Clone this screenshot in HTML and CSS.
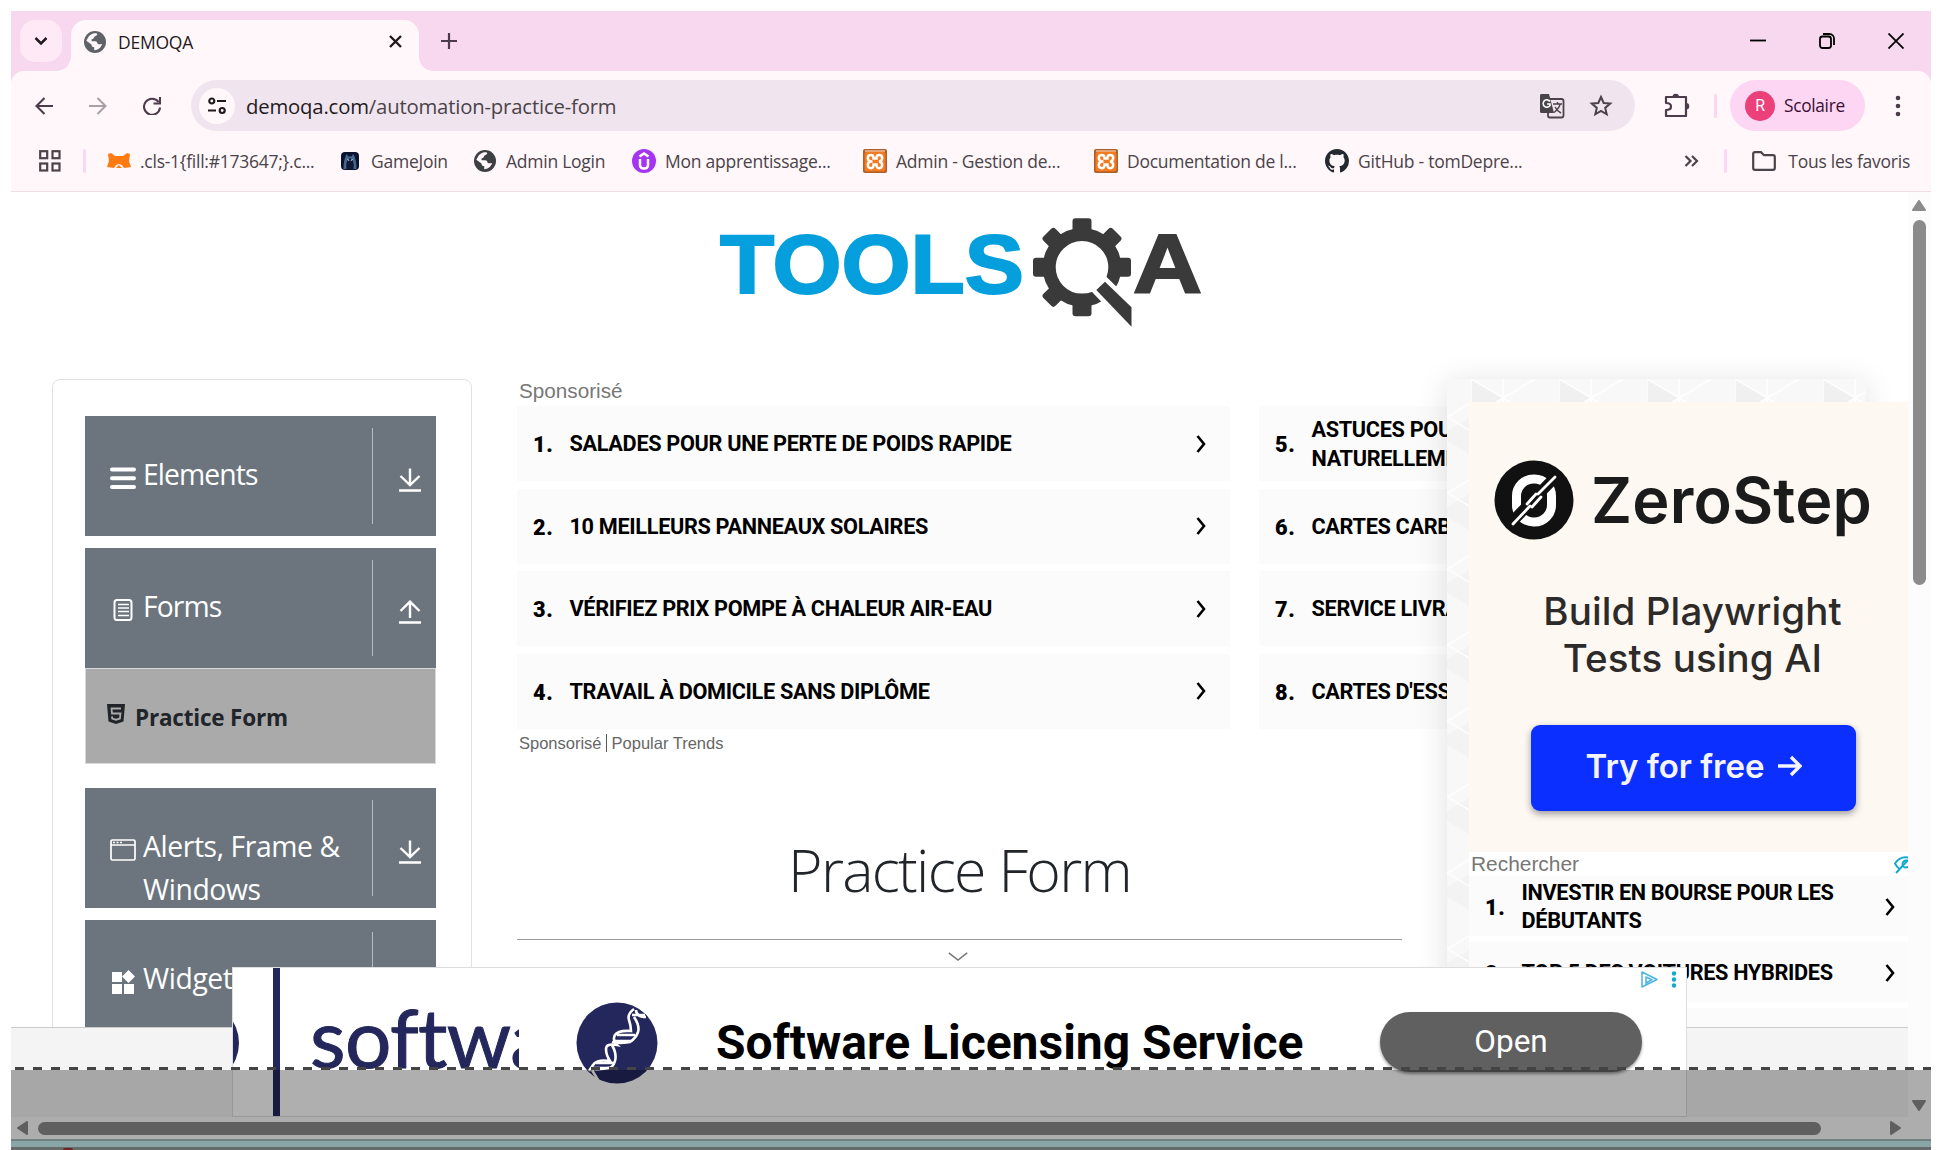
FILE: index.html
```html
<!DOCTYPE html>
<html lang="fr">
<head>
<meta charset="utf-8">
<title>DEMOQA</title>
<link rel="stylesheet" href="styles.css">
</head>
<body>
<svg class="defs" width="0" height="0">
  <symbol id="globe" viewBox="0 0 22 22"><circle cx="11" cy="11" r="11" fill="currentColor"/><path d="M3 8.500C5 4 8 2.300 12 2.300c1 0 1.500.8 1 1.600-.6 1-2.500 1-2.800 2.200-.3 1.300-.9 2-2.200 2.200-.8.2-.6 1.500 0 2h3.200c1.500 0 2.300 1 2.300 2.300 0 1 2.800.7 4.600.4-1.200 3.900-4.300 6.200-7.900 6.200v-2.900c-1.700-.2-2.700-1.200-2.700-2.900L2.300 9.800z" fill="#fff7fa"/></symbol>
  <symbol id="down" viewBox="0 0 22 24"><path d="M11 0.500v16M1.500 8l9.500 9 9.500-9M0 22.500h22" fill="none" stroke="#fff" stroke-width="2.400"/></symbol>
  <symbol id="up" viewBox="0 0 22 24"><path d="M11 18V2M1.500 11L11 1.600l9.500 9.400M0 22.500h22" fill="none" stroke="#fff" stroke-width="2.400"/></symbol>
  <symbol id="chev" viewBox="0 0 10 18"><path d="M1.500 1l6.500 8-6.500 8" fill="none" stroke="#000" stroke-width="2.600"/></symbol>
  <symbol id="xampp" viewBox="0 0 24 24"><rect width="24" height="24" rx="2" fill="#a95f2e"/><rect x="1.500" y="3" width="21" height="19.500" rx="2" fill="#f47a20"/><rect x="2" y="1" width="20" height="2" fill="#e6a477"/><path d="M9.500 12.500H8Q4.800 12 4.800 9T8 6q2.500 0 2.500 3v.5h3V9q0-3 2.500-3 3.200 0 3.200 3T16 12.500q3.200.5 3.200 3.500T16 19.200q-2.500 0-2.500-3.200v-.5h-3v.5q0 3.200-2.500 3.200-3.200 0-3.200-3.200T8 12.500" fill="none" stroke="#fff" stroke-width="2.400"/></symbol>
</svg>

<div class="window">
  <header class="tabstrip">
    <button class="tab-search"><svg width="14" height="10" viewBox="0 0 14 10"><path d="M1.500 2l5.500 5.500L12.500 2" fill="none" stroke="#1f1a1d" stroke-width="2.500"/></svg></button>
    <div class="tab">
      <svg class="tab-globe" width="22" height="22"><use href="#globe"/></svg>
      <span class="tab-title">DEMOQA</span>
      <svg width="13" height="13" viewBox="0 0 13 13"><path d="M1 1l11 11M12 1L1 12" stroke="#1f1a1d" stroke-width="2.400"/></svg>
    </div>
    <svg class="plus" width="16" height="16" viewBox="0 0 16 16"><path d="M8 0v16M0 8h16" stroke="#4d3a4a" stroke-width="2.200"/></svg>
    <div class="controls">
      <svg width="16" height="16" viewBox="0 0 16 16"><path d="M0 7.500h16" stroke="#000" stroke-width="1.800"/></svg>
      <svg width="16" height="16" viewBox="0 0 16 16"><path d="M4 1h6.500A4.500 4.500 0 0 1 15 5.500V12" fill="none" stroke="#000" stroke-width="1.800"/><rect x="1" y="3.500" width="11" height="11.500" rx="2.500" fill="none" stroke="#000" stroke-width="1.800"/></svg>
      <svg width="16" height="16" viewBox="0 0 16 16"><path d="M.5.5l15 15M15.500.5l-15 15" stroke="#000" stroke-width="1.800"/></svg>
    </div>
  </header>

  <nav class="toolbar">
    <svg width="18" height="18" viewBox="0 0 18 18"><path d="M18 9H2M9.500 1L1.500 9l8 8" fill="none" stroke="#4d3a4a" stroke-width="2.100"/></svg>
    <svg width="18" height="18" viewBox="0 0 18 18"><path d="M0 9h16M8.500 1l8 8-8 8" fill="none" stroke="#aaa1a8" stroke-width="2.100"/></svg>
    <svg width="18" height="18" viewBox="0 0 18 18"><path d="M15.500 5A8 8 0 1 0 17 10.500M17 0v6.500h-6.500" fill="none" stroke="#4d3a4a" stroke-width="2.100"/></svg>
    <div class="address">
      <span class="site"><svg width="18" height="18" viewBox="0 0 18 18"><g fill="none" stroke="#1f1a1d" stroke-width="2.200"><circle cx="3.800" cy="4" r="2.500"/><path d="M9 4h9M0 13.500h8"/><circle cx="14.200" cy="13.500" r="2.500"/></g></svg></span>
      <span class="url"><b>demoqa.com</b>/automation-practice-form</span>
      <svg class="translate" width="26" height="26" viewBox="0 0 26 26"><rect x="9" y="6" width="15.500" height="18.500" rx="2" fill="none" stroke="#4a4349" stroke-width="1.800"/><path d="M2 1h8l5 19H2.500A1.500 1.500 0 0 1 1 18.500V2.500Q1 1 2 1z" fill="#4a4349"/><path d="M11 8.500A3.700 3.700 0 1 0 11 12.500V11H8" fill="none" stroke="#fff" stroke-width="1.600"/><path d="M14 11h9M18.500 9v2M21 11.500q-1 4-6 8M16 14q2 4 6 6" fill="none" stroke="#4a4349" stroke-width="1.400"/></svg>
      <svg width="24" height="24" viewBox="0 0 24 24"><path d="M12 3l2.700 6 6.500.6-5 4.300 1.500 6.400L12 16.900l-5.700 3.400 1.500-6.400-5-4.300 6.500-.6z" fill="none" stroke="#4a4349" stroke-width="2"/></svg>
    </div>
    <svg class="puzzle" width="26" height="26" viewBox="0 0 26 26"><path d="M2 4h20v19H2v-6q5 0 5-3.500T2 10z" fill="none" stroke="#4d3a4a" stroke-width="2.200" stroke-linejoin="round"/><path d="M8.500 4a3.200 3.200 0 0 1 6.500 0zM22 10a3.200 3.200 0 0 1 0 6.500z" fill="#4d3a4a"/></svg>
    <i class="sep"></i>
    <div class="profile"><span class="avatar">R</span><span>Scolaire</span></div>
    <svg class="kebab" width="6" height="24" viewBox="0 0 6 24"><g fill="#4d3a4a"><circle cx="3" cy="4" r="2.300"/><circle cx="3" cy="12" r="2.300"/><circle cx="3" cy="20" r="2.300"/></g></svg>
  </nav>

  <nav class="bookmarks">
    <svg width="22" height="22" viewBox="0 0 22 22"><g fill="none" stroke="#4a4349" stroke-width="2.200"><rect x="1.200" y="1.200" width="7" height="7"/><rect x="13.500" y="1.200" width="7" height="7"/><rect x="1.200" y="13.500" width="7" height="7"/><rect x="13.500" y="13.500" width="7" height="7"/></g></svg>
    <i class="sep"></i>
    <div class="marks">
      <a><svg width="24" height="24" viewBox="0 0 24 24"><path d="M1 5l3-1 4 3h8l4-3 3 1-1 7 2 6-7 1-2-3-3-1-3 1-2 3-7-1 2-6zM9 19l3-3 3 3z" fill="#ff7a10"/></svg><span>.cls-1{fill:#173647;}.c...</span></a>
      <a><svg width="24" height="24" viewBox="0 0 24 24"><rect x="3" y="3" width="18" height="18" rx="4" fill="#0b1230"/><path d="M5.500 20q0-9 3-15l2 2.500h3l2-2.500q3 6 3 15z" fill="#45678d"/><path d="M8.500 20Q7 12 12 9q5 3 3.500 11z" fill="#121a33"/><path d="M9.500 10.500l1.700 1M14.500 10.500l-1.700 1" stroke="#dfeeff"/></svg><span>GameJoin</span></a>
      <a class="dark"><svg width="24" height="22"><use href="#globe" x="1" width="22" height="22"/></svg><span>Admin Login</span></a>
      <a><svg width="24" height="24" viewBox="0 0 24 24"><circle cx="12" cy="12" r="12" fill="#a435f0"/><path d="M8 10v6q0 3.500 4 3.500t4-3.500v-6M7.500 7.500L12 4.500l4.500 3" fill="none" stroke="#fff" stroke-width="2.500"/></svg><span>Mon apprentissage...</span></a>
      <a><svg width="24" height="24"><use href="#xampp"/></svg><span>Admin - Gestion de...</span></a>
      <a><svg width="24" height="24"><use href="#xampp"/></svg><span>Documentation de l...</span></a>
      <a><svg width="24" height="24" viewBox="0 0 16 16"><path fill="#24292f" d="M8 0C3.580 0 0 3.580 0 8c0 3.540 2.290 6.530 5.470 7.590.4.070.55-.17.55-.38 0-.19-.01-.82-.01-1.490-2.010.37-2.530-.49-2.690-.94-.09-.23-.48-.94-.82-1.130-.28-.15-.68-.52-.01-.53.63-.01 1.080.58 1.230.82.720 1.210 1.870.87 2.330.66.070-.52.280-.87.510-1.070-1.780-.2-3.640-.89-3.640-3.950 0-.87.310-1.590.82-2.150-.08-.2-.36-1.020.08-2.120 0 0 .67-.21 2.200.82.640-.18 1.320-.27 2-.27s1.360.09 2 .27c1.530-1.040 2.200-.82 2.200-.82.440 1.100.16 1.920.08 2.120.51.560.82 1.270.82 2.150 0 3.070-1.870 3.750-3.650 3.950.29.250.54.730.54 1.480 0 1.070-.01 1.930-.01 2.200 0 .21.150.46.550.38A8.010 8.010 0 0 0 16 8c0-4.420-3.580-8-8-8z"/></svg><span>GitHub - tomDepre...</span></a>
    </div>
    <svg class="more" width="15" height="12" viewBox="0 0 15 12"><path d="M1.500 1l5 5-5 5M8 1l5 5-5 5" fill="none" stroke="#4a4349" stroke-width="2.200"/></svg>
    <i class="sep"></i>
    <svg class="folder" width="24" height="20" viewBox="0 0 24 20"><path d="M1.200 17V3q0-1.800 1.800-1.800h6l3 3h9q1.800 0 1.800 1.800v11q0 1.800-1.800 1.800H3q-1.800 0-1.800-1.800z" fill="none" stroke="#4a4349" stroke-width="2.200"/></svg>
    <span class="all">Tous les favoris</span>
  </nav>

  <div class="viewport">
    <div class="page">
      <div class="content">
        <div class="brand">
          <svg width="520" height="140" viewBox="0 0 520 140">
            <text x="20" y="92.500" class="tools" textLength="304" lengthAdjust="spacingAndGlyphs">TOOLS</text>
            <g transform="translate(382 67.300)" fill="#3a3a3a">
              <circle r="32.800" fill="none" stroke="#3a3a3a" stroke-width="13"/>
              <g><rect x="-9.500" y="-49" width="19" height="14" rx="3"/><rect x="-9.500" y="35" width="19" height="14" rx="3"/><rect x="-49" y="-9.500" width="14" height="19" rx="3"/><rect x="35" y="-9.500" width="14" height="19" rx="3"/></g>
              <g transform="rotate(45)"><rect x="-8.500" y="-49" width="17" height="14" rx="3"/><rect x="-8.500" y="35" width="17" height="14" rx="3"/><rect x="-49" y="-8.500" width="14" height="17" rx="3"/></g>
            </g>
            <path d="M405 81.700l26.500 25.600v19.400L396.300 90z" fill="#3a3a3a" stroke="#fff" stroke-width="9" paint-order="stroke"/>
            <text x="433" y="92.500" class="qa" textLength="69" lengthAdjust="spacingAndGlyphs">A</text>
          </svg>
        </div>
        <div class="columns">
          <aside class="side">
            <div class="group"><svg width="26" height="24" viewBox="0 0 26 24"><path d="M2 3.500h22M2 12.200h22M2 21h22" stroke="#fff" stroke-width="4" stroke-linecap="round"/></svg><span class="tight">Elements</span><i><svg width="22" height="24"><use href="#down"/></svg></i></div>
            <div class="group open"><svg width="26" height="24" viewBox="0 0 26 24"><rect x="4.500" y="2" width="17" height="20" rx="2.500" fill="none" stroke="#fff" stroke-width="2"/><path d="M8 6.500h11M8 10h11M8 13.500h11M8 17.500h11" stroke="#fff" stroke-width="1.500"/></svg><span class="tight">Forms</span><i><svg width="22" height="24"><use href="#up"/></svg></i></div>
            <div class="sub"><svg width="18" height="20" viewBox="0 0 18 20"><path d="M0 0h18l-1.500 17.500L9 20l-7.500-2.500z" fill="#212529"/><path d="M14 4.500H4.500L5 9.500h8.500l-.6 5L9 15.700l-3.800-1.200-.2-2.200" fill="none" stroke="#aaa" stroke-width="1.800"/></svg><span>Practice Form</span></div>
            <div class="group"><svg width="26" height="24" viewBox="0 0 26 24"><rect x="1" y="2" width="24" height="20" rx="1.500" fill="none" stroke="#fff" stroke-width="1.700"/><path d="M1 7h24" stroke="#fff" stroke-width="1.500"/><path d="M3 4.500h10" stroke="#fff" stroke-width="1.600" stroke-dasharray="2 1.500"/></svg><span>Alerts, Frame &amp; Windows</span><i><svg width="22" height="24"><use href="#down"/></svg></i></div>
            <div class="group"><svg width="26" height="24" viewBox="0 0 26 24"><g fill="#fff"><path d="M2 2h10v10H2zM2 14h10v10H2zM14 14h10v10H14zM18.500 0l6.500 6.500-6.500 6.500L12 6.500z"/></g></svg><span>Widgets</span><i><svg width="22" height="24"><use href="#down"/></svg></i></div>
          </aside>
          <main class="main">
            <div class="sponsor">Sponsorisé</div>
            <div class="links">
              <div class="link"><b>1.</b><span>SALADES POUR UNE PERTE DE POIDS RAPIDE</span><svg width="10" height="18"><use href="#chev"/></svg></div>
              <div class="link"><b>5.</b><span>ASTUCES POUR MAIGRIR<br>NATURELLEMENT</span></div>
              <div class="link"><b>2.</b><span>10 MEILLEURS PANNEAUX SOLAIRES</span><svg width="10" height="18"><use href="#chev"/></svg></div>
              <div class="link"><b>6.</b><span>CARTES CARBURANT</span></div>
              <div class="link"><b>3.</b><span>VÉRIFIEZ PRIX POMPE À CHALEUR AIR-EAU</span><svg width="10" height="18"><use href="#chev"/></svg></div>
              <div class="link"><b>7.</b><span>SERVICE LIVRAISON</span></div>
              <div class="link"><b>4.</b><span>TRAVAIL À DOMICILE SANS DIPLÔME</span><svg width="10" height="18"><use href="#chev"/></svg></div>
              <div class="link"><b>8.</b><span>CARTES D'ESSENCE</span></div>
            </div>
            <div class="credit"><span>Sponsorisé</span><span>Popular Trends</span></div>
            <h1>Practice Form</h1>
            <svg class="collapse" width="20" height="9" viewBox="0 0 20 9"><path d="M.8.8L10 8 19.200.8" fill="none" stroke="#777" stroke-width="1.500"/></svg>
          </main>
        </div>
        <section class="rail">
          <svg class="weave" width="419" height="700"><defs><pattern id="tri" width="88" height="76" patternUnits="userSpaceOnUse" x="24"><rect width="88" height="76" fill="#f8f8f8"/><path d="M0 0l32 19L0 38z" fill="#f0f0f0"/><path d="M88 38L56 57l32 19z" fill="#f3f3f3"/><path d="M0 38l32-19 32 19-32 19z" fill="#fafafa"/><path d="M0 0l88 52M0 38l64-38M0 76L88 24M0 38l64 38M32 0v76M0 0v76" fill="none" stroke="#fff" stroke-width="1.500"/></pattern></defs><rect width="419" height="700" fill="url(#tri)"/></svg>
          <div class="rail-body">
            <div class="zero">
              <div class="zero-logo">
                <svg width="80" height="80" viewBox="0 0 80 80"><circle cx="40" cy="40" r="39.500" fill="#111"/><rect x="22.500" y="19" width="35" height="43" rx="17" fill="none" stroke="#fff" stroke-width="9"/><path d="M14 66L66 12" stroke="#111" stroke-width="11"/><path d="M19 64l17-18M44 34l17-17M33 44l9-10M38 47l9-10" stroke="#fff" stroke-width="2.800" stroke-linecap="round"/></svg>
                <span>ZeroStep</span>
              </div>
              <p>Build Playwright<br>Tests using AI</p>
              <div class="try">Try for free <svg width="25" height="22" viewBox="0 0 25 22"><path d="M1 11h22M14 2l9 9-9 9" fill="none" stroke="#f4f4ff" stroke-width="3.400"/></svg></div>
            </div>
            <div class="search"><span>Rechercher</span><svg width="14" height="18" viewBox="0 0 14 18"><g fill="none" stroke="#11a9cc" stroke-width="1.900"><path d="M14 1.500Q6 0 1 7.500q1.500 3 4 5M2 17L14 4"/><circle cx="12" cy="8" r="3.500"/></g></svg></div>
            <div class="link small"><b>1.</b><span>INVESTIR EN BOURSE POUR LES<br>DÉBUTANTS</span><svg width="10" height="18"><use href="#chev"/></svg></div>
            <div class="link small"><b>2.</b><span>TOP 5 DES VOITURES HYBRIDES</span><svg width="10" height="18"><use href="#chev"/></svg></div>
            <div class="link small"></div>
          </div>
        </section>
      </div>
      <footer class="footer"></footer>
      <section class="banner">
        <div class="creative">
          <svg width="286" height="148" viewBox="0 0 286 148"><circle cx="-35" cy="75" r="41" fill="#23275c"/><rect x="40" y="0" width="7" height="148" fill="#23275c"/><text x="77" y="100" class="soft">softwa</text></svg>
        </div>
        <svg class="dna" width="82" height="82" viewBox="0 0 82 82"><circle cx="41" cy="41" r="40.500" fill="#23275c"/><g fill="none" stroke="#fff" stroke-width="2.600"><path d="M58 7Q51 12 53 18T55 29Q42 28 39 33T41 43Q30 41 30 47T34 59Q21 57 17 63T13 69"/><path d="M60 8Q60 15 70 15M58 15Q64 24 62 30T54 40Q42 42 36 40M36 43Q41 52 39 59T32 66Q22 68 17 67M16 68L22 78"/><path d="M56 13h13M41 33h18M37 39h18M20 61h18M17 66h16"/></g></svg>
        <div class="headline">Software Licensing Service</div>
        <div class="open-btn">Open</div>
        <div class="choices"><svg width="17" height="17" viewBox="0 0 17 17"><path d="M1 1v15l4-2V6l6 2.700L5 12v2l11-5.500z" fill="none" stroke="#4cb4e0" stroke-width="1.500" stroke-linejoin="round"/></svg><svg width="6" height="17" viewBox="0 0 6 17"><g fill="#11a9cc"><circle cx="3" cy="2.500" r="2.200"/><circle cx="3" cy="8.500" r="2.200"/><circle cx="3" cy="14.500" r="2.200"/></g></svg></div>
      </section>
    </div>
    <div class="vscroll">
      <svg width="14" height="11" viewBox="0 0 14 11"><path d="M7 1L13 10H1z" fill="#8b8b8b" stroke="#8b8b8b" stroke-width="2" stroke-linejoin="round"/></svg>
      <i></i>
      <svg class="vdown" width="14" height="11" viewBox="0 0 14 11"><path d="M7 10L13 1H1z" fill="#8b8b8b" stroke="#8b8b8b" stroke-width="2" stroke-linejoin="round"/></svg>
    </div>
  </div>
  <div class="hscroll">
    <svg width="11" height="14" viewBox="0 0 11 14"><path d="M1 7l9-6v12z" fill="#8b8b8b" stroke="#8b8b8b" stroke-width="2" stroke-linejoin="round"/></svg>
    <i></i>
    <svg class="hright" width="11" height="14" viewBox="0 0 11 14"><path d="M10 7L1 1v12z" fill="#8b8b8b" stroke="#8b8b8b" stroke-width="2" stroke-linejoin="round"/></svg>
  </div>
  <div class="desk"><i></i></div>
  <div class="mask"></div>
</div>
</body>
</html>
```
FILE: styles.css
```css
* { box-sizing: border-box; }
html, body { margin: 0; background: #fff; overflow: hidden; }
body { height: 1150px; font-family: "Open Sans", "Noto Sans", sans-serif; color: #212529; }
svg { display: block; flex: none; }
i { font-style: normal; }
.defs { position: absolute; }
.window { position: relative; width: 1920px; height: 1139px; margin: 11px 0 0 11px; overflow: hidden; display: flex; flex-direction: column; background: #f7d8ef; }

/* tab strip */
.tabstrip { height: 60px; flex: none; display: flex; align-items: center; padding-left: 9px; }
.tab-search { width: 42px; height: 42px; border: 0; border-radius: 15px; background: #ffe9f7; display: flex; align-items: center; justify-content: center; padding: 0; }
.tab { position: relative; align-self: flex-end; width: 348px; height: 51px; margin-left: 9px; padding: 0 17px 8px 13px; border-radius: 15px 15px 0 0; background: #fff7fa; display: flex; align-items: center; }
.tab::before, .tab::after { content: ""; position: absolute; bottom: 0; width: 14px; height: 14px; }
.tab::before { left: -14px; background: radial-gradient(circle at 0 0, #f7d8ef 13.500px, #fff7fa 14px); }
.tab::after { right: -14px; background: radial-gradient(circle at 100% 0, #f7d8ef 13.500px, #fff7fa 14px); }
.tab-globe { color: #5f6368; }
.tab-title { flex: 1; margin-left: 12px; font-size: 17.500px; letter-spacing: -.25px; color: #1f1a1d; padding-top: 1px; }
.plus { margin-left: 22px; }
.controls { margin-left: auto; display: flex; gap: 53px; padding-right: 27px; }

/* toolbar */
.toolbar { height: 60px; flex: none; display: flex; align-items: center; padding: 9px 30px 0 24px; background: #fff7fa; border-radius: 13px 13px 0 0; }
.toolbar > svg + svg { margin-left: 36px; }
.address { width: 1444px; height: 51px; margin-left: 30px; padding: 0 22px 0 8px; border-radius: 26px; background: #f0e5ee; display: flex; align-items: center; }
.site { width: 36px; height: 36px; border-radius: 50%; background: #fff7fa; display: flex; align-items: center; justify-content: center; }
.url { flex: 1; margin-left: 11px; font-size: 20.300px; letter-spacing: -.17px; color: #4a4349; }
.url b { font-weight: 400; color: #1f1a1d; }
.translate { margin-right: 24px; }
.sep { width: 3px; height: 24px; border-radius: 2px; background: #fcd6f2; flex: none; }
.puzzle { margin: 0 24px 0 29px; }
.profile { width: 135px; height: 51px; margin-left: 13px; padding-left: 15px; border-radius: 26px; background: #fcd6f2; display: flex; align-items: center; gap: 9px; font-size: 17.300px; letter-spacing: -.3px; color: #380f33; }
.avatar { width: 30px; height: 30px; border-radius: 50%; background: #ec407a; color: #fff; display: flex; align-items: center; justify-content: center; font: 16px Roboto, sans-serif; }
.kebab { margin-left: auto; }
.bookmarks { height: 61px; flex: none; padding: 0 21px 1px 28px; border-bottom: 1px solid #f0dbe6; background: #fff7fa; display: flex; align-items: center; font-size: 17.500px; letter-spacing: -.25px; color: #4a4349; white-space: nowrap; }
.bookmarks > .sep:nth-child(2) { margin: 0 21px 0 22px; }
.marks { flex: 1; display: grid; grid-template-columns: 231px 135px 159px 231px 231px 231px 220px; }
.marks a { display: flex; align-items: center; gap: 9px; }
.dark { color: #3c4043; }
.dark span { color: #4a4349; }
.more { margin-right: 25px; }
.folder { margin: 0 12px 0 25px; }

/* page */
.viewport { height: 925px; flex: none; display: flex; background: #fff; }
.page { position: relative; width: 1897px; height: 925px; overflow: hidden; }
.content { position: relative; height: 835px; overflow: hidden; }
.brand { height: 187px; padding: 8px 0 0 689px; }
.tools { font: bold 84px "Liberation Sans", Arial, sans-serif; fill: #049fdc; stroke: #049fdc; stroke-width: 2px; }
.qa { font: bold 84px "Liberation Sans", Arial, sans-serif; fill: #3a3a3a; stroke: #3a3a3a; stroke-width: 2px; }
.columns { display: flex; gap: 45px; padding-left: 41px; }
.side { width: 420px; height: 900px; flex: none; padding: 36px 35px 0 32px; border: 1px solid #dee2e6; border-radius: 8px; }
.group { height: 120px; margin-bottom: 12px; padding: 48px 0 0 25px; background: #6c757d; color: #fff; display: flex; align-items: flex-start; position: relative; }
.group.open { margin-bottom: 0; }
.group > svg { margin-top: 2px; }
.group span { width: 215px; margin: -11px 0 0 7px; font-size: 28.300px; line-height: 43px; letter-spacing: -.4px; }
.group .tight { letter-spacing: -.9px; }
.group > i { height: 96px; margin: -36px 0 0 14px; padding: 40px 0 0 26px; border-left: 1px solid #b8bcbf; }
.sub { height: 96px; margin-bottom: 24px; padding-left: 21px; background: #aaa; border: 1px solid #d5d9dc; display: flex; align-items: center; gap: 10px; font-size: 22.500px; font-weight: 700; letter-spacing: -.2px; }
.sub svg { margin-top: -4px; }
.sub span { padding-top: 2px; }
.main { width: 885px; flex: none; }
.sponsor { height: 27px; padding-left: 2px; font: 20.700px/23px "Liberation Sans", Arial, sans-serif; color: #777; }
.links { display: grid; grid-template-columns: 713px 713px; gap: 7.600px 29px; }
.link { height: 75px; padding: 0 24px 0 16px; background: #fbfbfb; display: flex; align-items: center; font: bold 21.700px/29px Roboto, sans-serif; letter-spacing: -.33px; color: #000; white-space: nowrap; }
.link b { width: 36.500px; letter-spacing: .6px; padding-top: 2px; }
.link span { flex: 1; }
.credit { display: flex; margin: 5px 0 0 2px; font: 16.500px/18px "Liberation Sans", Arial, sans-serif; color: #666; height: 18px; }
.credit span + span { margin-left: 4px; padding-left: 5px; border-left: 1px solid #555; }
.main h1 { height: 188px; margin: 0; padding-top: 77px; border-bottom: 1px solid #999; text-align: center; font-size: 59px; line-height: 80px; font-weight: 300; letter-spacing: -1.700px; }
.collapse { margin: 12px 0 0 431px; }

/* right rail lies over the sponsored links */
.rail { position: absolute; left: 1436px; top: 187px; width: 419px; height: 700px; box-shadow: 0 4px 30px rgba(0,0,0,.12); }
.weave { position: absolute; left: 0; top: 0; }
.rail-body { position: relative; width: 439px; margin: 23px 0 0 22px; background: #fff; }
.zero { height: 450px; padding-top: 58px; background: #fdf8f1; font-family: Inter, sans-serif; color: #1b1b1b; }
.zero-logo { display: flex; align-items: center; gap: 17px; padding-left: 25px; font-size: 63px; line-height: 80px; font-weight: 600; letter-spacing: .2px; }
.zero p { margin: 48px 0 0 8px; text-align: center; font-size: 38.500px; line-height: 47px; font-weight: 500; letter-spacing: .1px; color: #2d2b29; }
.try { width: 325px; height: 86px; margin: 43px 0 0 62px; border-radius: 9px; background: #0b2fff; box-shadow: 0 3px 7px rgba(40,40,60,.45); color: #f4f4ff; display: flex; align-items: center; justify-content: center; gap: 12px; padding-bottom: 5px; font-size: 33px; font-weight: 600; }
.search { height: 24px; padding-left: 2px; display: flex; justify-content: space-between; font: 20.900px/24px "Liberation Sans", Arial, sans-serif; color: #777; }
.search svg { margin-top: 4px; }
.link.small { height: 60px; margin-bottom: 6px; padding: 1px 13px 0 16px; line-height: 28px; }

/* footer and anchored ad */
.footer { height: 90px; background: #f4f4f4; border-top: 1px solid #ccc; }
.banner { position: absolute; left: 221px; top: 775px; width: 1455px; height: 150px; background: #fff; border: 1px solid #ddd; display: flex; align-items: flex-start; }
.creative { width: 286px; height: 148px; overflow: hidden; }
.soft { font: 82px Lato, sans-serif; letter-spacing: -.6px; fill: #23275c; stroke: #23275c; stroke-width: 1px; }
.dna { margin: 34px 0 0 57px; }
.headline { margin: 46px 0 0 58px; width: 664px; font: bold 48px/58px Roboto, sans-serif; color: #000; white-space: nowrap; }
.open-btn { width: 262px; height: 60px; margin-top: 44px; border-radius: 30px; background: #606060; box-shadow: 0 2px 3px rgba(0,0,0,.4); color: #fff; text-align: center; font: 31.500px/60px Roboto, sans-serif; }
.choices { position: absolute; right: 9px; top: 3px; display: flex; gap: 13px; }

/* scrollbars */
.vscroll { flex: 1; background: #fcfcfc; padding: 8px 0 0 4px; }
.vscroll i { display: block; width: 13px; height: 365px; margin: 9px 0 0 1px; border-radius: 7px; background: #8b8b8b; }
.vdown { margin-top: 515px; }
.hscroll { height: 22px; flex: none; background: #fcfcfc; display: flex; align-items: center; padding: 0 30px 0 6px; }
.hscroll i { width: 1783px; height: 13px; margin-left: 10px; border-radius: 7px; background: #8b8b8b; }
.hright { margin-left: auto; }
.desk { position: relative; flex: 1; background: #c9f0f0; border-top: 2px solid #a5bcbc; border-bottom: 3px solid #939d9b; }
.desk i { position: absolute; left: 52px; bottom: -3px; width: 10px; height: 2px; border-radius: 5px 5px 0 0; background: #a33; }
.mask { position: absolute; left: 0; right: 0; top: 1056px; bottom: 0; padding-top: 3px; background: repeating-linear-gradient(90deg, transparent 0 4px, #444 4px 13px, transparent 13px 18px) 0 0 / 100% 3px no-repeat; }
.mask::after { content: ""; display: block; height: 100%; background: rgba(0,0,0,.315); }
```
